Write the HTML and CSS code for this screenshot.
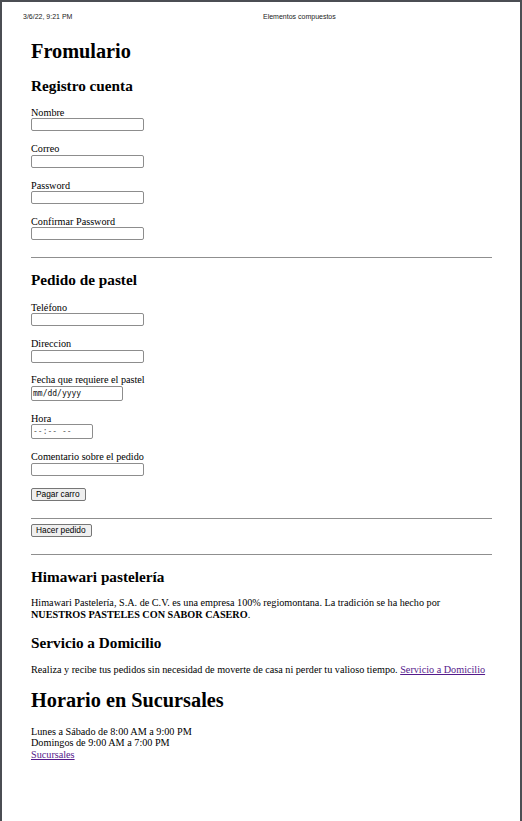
FILE: index.html
```html
<!DOCTYPE html>
<html lang="es">
<head>
<meta charset="utf-8">
<title>Elementos compuestos</title>
<link rel="stylesheet" href="styles.css">
</head>
<body>
<div class="sheet">
  <header class="print-header">
    <span class="print-date">3/6/22, 9:21 PM</span>
    <span class="print-title">Elementos compuestos</span>
  </header>
  <main class="content">
    <h1 class="h1 first">Fromulario</h1>

    <section class="block">
      <h2 class="h2 reg">Registro cuenta</h2>
      <div class="field"><label class="lbl">Nombre</label><input class="txt" type="text"></div>
      <div class="field"><label class="lbl">Correo</label><input class="txt" type="text"></div>
      <div class="field"><label class="lbl">Password</label><input class="txt" type="text"></div>
      <div class="field"><label class="lbl">Confirmar Password</label><input class="txt" type="text"></div>
    </section>

    <hr class="rule r1">

    <section class="block">
      <h2 class="h2 ped">Pedido de pastel</h2>
      <div class="field"><label class="lbl">Teléfono</label><input class="txt" type="text"></div>
      <div class="field"><label class="lbl">Direccion</label><input class="txt" type="text"></div>
      <div class="field"><label class="lbl">Fecha que requiere el pastel</label><span class="fake date">mm/dd/yyyy</span></div>
      <div class="field"><label class="lbl">Hora</label><span class="fake time">--:-- --</span></div>
      <div class="field"><label class="lbl">Comentario sobre el pedido</label><input class="txt" type="text"></div>
      <div class="btn-row b1"><button class="btn" type="button">Pagar carro</button></div>
    </section>

    <hr class="rule r2">
    <div class="btn-row b2"><button class="btn" type="button">Hacer pedido</button></div>
    <hr class="rule r3">

    <h2 class="h2 him">Himawari pastelería</h2>
    <p class="para p1">Himawari Pastelería, S.A. de C.V. es una empresa 100% regiomontana. La tradición se ha hecho por <strong>NUESTROS PASTELES CON SABOR CASERO</strong>.</p>

    <h2 class="h2 serv">Servicio a Domicilio</h2>
    <p class="para p2">Realiza y recibe tus pedidos sin necesidad de moverte de casa ni perder tu valioso tiempo. <a class="link" href="#">Servicio a Domicilio</a></p>

    <h1 class="h1 hor">Horario en Sucursales</h1>
    <div class="hours">
      <span>Lunes a Sábado de 8:00 AM a 9:00 PM</span>
      <span>Domingos de 9:00 AM a 7:00 PM</span>
      <a class="link" href="#">Sucursales</a>
    </div>
  </main>
</div>
</body>
</html>
```
FILE: styles.css
```css
html, body {
  margin: 0;
  padding: 0;
}
body {
  background: #4b4e53;
  width: 522px;
  height: 821px;
  overflow: hidden;
}
.sheet {
  margin: 2px 2px 0 2px;
  background: #fff;
  height: 819px;
  display: flex;
  flex-direction: column;
  font-family: "Liberation Serif", "Times New Roman", serif;
  color: #000;
}
.print-header {
  display: grid;
  grid-template-columns: 240px auto;
  padding: 11px 0 0 21px;
  font-family: "Liberation Sans", Arial, sans-serif;
  font-size: 7px;
  line-height: 8px;
  color: #222;
}
.content {
  display: flex;
  flex-direction: column;
  align-items: stretch;
  padding: 0 28px 0 29px;
  font-size: 10.2px;
  line-height: 11.5px;
}
.h1 {
  font-size: 20.3px;
  line-height: 23px;
  font-weight: bold;
  margin: 0;
}
.h1.first { margin-top: 18.5px; }
.h1.hor { margin-bottom: 13.75px; }
.h2 {
  font-size: 15.25px;
  line-height: 17px;
  font-weight: bold;
  margin: 13px 0 13.3px;
}
.h2.reg { margin-top: 14px; }
.h2.him { margin-bottom: 12.45px; }
.h2.serv { margin-top: 0; margin-bottom: 13px; }
.block {
  display: flex;
  flex-direction: column;
}
.field {
  display: flex;
  flex-direction: column;
  align-items: flex-start;
  margin-bottom: 11.9px;
}
.lbl {
  display: block;
  line-height: 11.5px;
  height: 11.5px;
}
.txt {
  box-sizing: border-box;
  width: 113px;
  height: 13px;
  margin: 0;
  padding: 0 2px;
  border: 1px solid #8d8d8d;
  border-radius: 2px;
  background: #fff;
  font-size: 8px;
}
.fake {
  box-sizing: border-box;
  display: block;
  height: 15px;
  border: 1px solid #8d8d8d;
  border-radius: 2px;
  padding: 0 1px;
  font-family: "DejaVu Sans Mono", "Liberation Mono", monospace;
  font-size: 8px;
  line-height: 13px;
}
.fake.date { width: 92px; color: #111; }
.fake.time { width: 62px; color: #555; }
.btn-row {
  display: flex;
}
.btn-row.b1 { margin-bottom: 17.2px; }
.btn-row.b2 { margin-top: 5px; margin-bottom: 17px; }
.btn {
  box-sizing: border-box;
  height: 13px;
  margin: 0;
  padding: 0 5px 0 4px;
  border: 1px solid #767676;
  border-radius: 2px;
  background: #efefef;
  font-family: "Liberation Sans", Arial, sans-serif;
  font-size: 8.33px;
  line-height: 11px;
  color: #000;
}
.rule {
  width: 100%;
  height: 0;
  margin: 0;
  border: 0;
  border-top: 1px solid #8f8f8f;
}
.rule.r1 { margin-top: 5px; }
.para {
  margin: 0;
  line-height: 11.5px;
}
.para.p1 { margin-bottom: 13.45px; }
.para.p2 { margin-bottom: 13.8px; }
.link {
  color: #551a8b;
  text-decoration: underline;
}
.hours {
  display: flex;
  flex-direction: column;
  align-items: flex-start;
  line-height: 11.5px;
}
```
